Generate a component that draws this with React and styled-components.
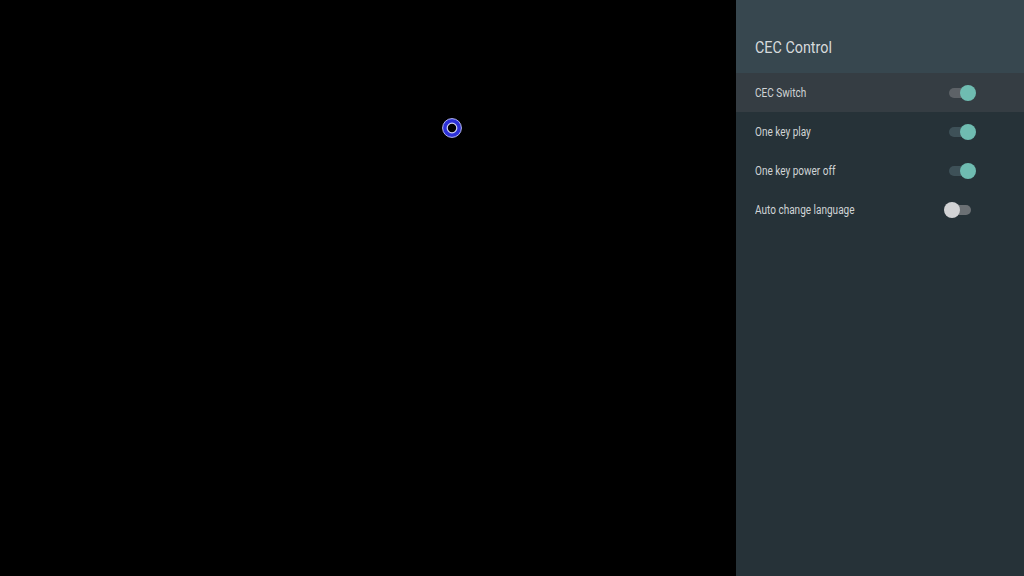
import styled, { createGlobalStyle } from "styled-components";

const GlobalStyle = createGlobalStyle`
  html, body {
    margin: 0;
    padding: 0;
    background: #000;
  }
  body {
    font-family: Roboto, "Liberation Sans", sans-serif;
  }
`;

const settings = [
  { label: "CEC Switch", on: true },
  { label: "One key play", on: true },
  { label: "One key power off", on: true },
  { label: "Auto change language", on: false },
];

const Pointer = () => (
  <svg width="24" height="24" viewBox="0 0 24 24">
    <circle cx="12" cy="12" r="9.4" fill="#2c30d8" stroke="#b4b7ee" strokeWidth="1" />
    <circle cx="12" cy="12" r="4.8" fill="#000" stroke="#d0d2f4" strokeWidth="1.2" />
  </svg>
);

const App = () => {
  return (
    <Screen>
      <GlobalStyle />
      <Stage>
        <PointerSpot>
          <Pointer />
        </PointerSpot>
      </Stage>
      <Panel>
        <Header>
          <Title>CEC Control</Title>
        </Header>
        <List>
          {settings.map((s, i) => (
            <Row key={s.label} $focused={i === 0}>
              <Label>{s.label}</Label>
              <Toggle>
                <Track $on={s.on} $focused={i === 0} />
                <Knob $on={s.on} />
              </Toggle>
            </Row>
          ))}
        </List>
      </Panel>
    </Screen>
  );
};

export default App;

const Screen = styled.div`
  display: flex;
  width: 1024px;
  height: 576px;
  overflow: hidden;
  background: #000;
`;
const Stage = styled.div`
  flex: 1;
  position: relative;
`;
const PointerSpot = styled.div`
  position: absolute;
  left: 440px;
  top: 116px;
  width: 24px;
  height: 24px;
`;
const Panel = styled.div`
  width: 288px;
  display: flex;
  flex-direction: column;
  background: #263238;
`;
const Header = styled.div`
  height: 73px;
  display: flex;
  align-items: flex-end;
  padding: 0 19px 16px;
  box-sizing: border-box;
  background: #37474f;
`;
/* condensed look: narrow the glyphs from the left edge */
const Title = styled.div`
  color: #d6dadc;
  font-size: 16.5px;
  transform: scaleX(0.87);
  transform-origin: left center;
`;
const List = styled.div`
  display: flex;
  flex-direction: column;
`;
const Row = styled.div`
  height: 39px;
  display: flex;
  align-items: center;
  justify-content: space-between;
  padding: 0 48px 0 19px;
  background: ${(p) => (p.$focused ? "#353d43" : "transparent")};
`;
const Label = styled.div`
  color: #d0d4d6;
  font-size: 12px;
  transform: scaleX(0.835);
  transform-origin: left center;
`;
const Toggle = styled.div`
  position: relative;
  width: 32px;
  height: 16px;
`;
const Track = styled.div`
  position: absolute;
  left: 5px;
  top: 3px;
  width: 22px;
  height: 10px;
  border-radius: 5px;
  background: ${(p) =>
    !p.$on ? "#6b7074" : p.$focused ? "#5d6267" : "#3e5158"};
`;
const Knob = styled.div`
  position: absolute;
  top: 0;
  left: ${(p) => (p.$on ? "16px" : "0")};
  width: 16px;
  height: 16px;
  border-radius: 50%;
  background: ${(p) => (p.$on ? "#6fbcb1" : "#d2d3d5")};
`;
